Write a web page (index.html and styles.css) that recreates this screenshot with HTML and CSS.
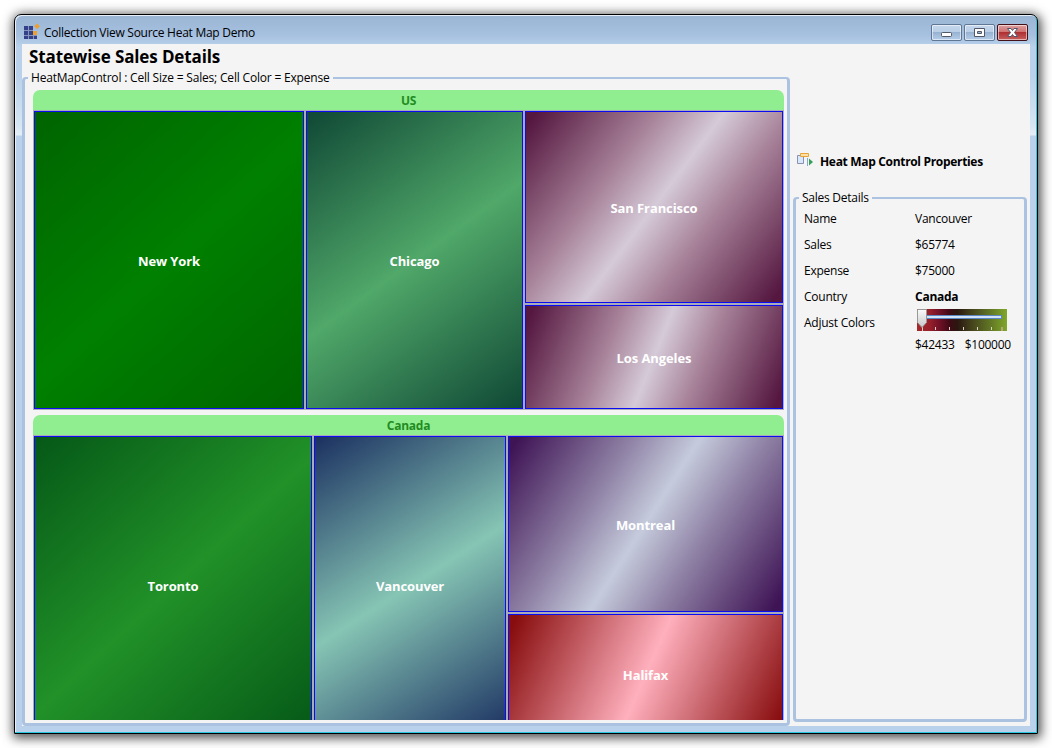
FILE: index.html
```html
<!DOCTYPE html>
<html lang="en">
<head>
<meta charset="utf-8">
<title>Collection View Source Heat Map Demo</title>
<link rel="stylesheet" href="styles.css">
</head>
<body>
<div class="window">
  <header class="titlebar">
    <svg class="app-icon" width="16" height="17" viewBox="0 0 16 17">
      <path fill="#8795bd" d="M0 3h9v13H0zM9 12h4v4H9z"/>
      <path fill="#34408a" shape-rendering="crispEdges" d="M0 3h4v4H0zM5 3h4v4H5zM0 8h4v4H0zM5 8h4v4H5zM0 13h4v3H0zM5 13h4v3H5zM10 13h3v3h-3z"/>
      <path fill="#eda02f" d="M9 8h4v4H9zM13 0.500l2.800 2.800L13 6.100l-2.800-2.800z"/>
    </svg>
    <span class="title">Collection View Source Heat Map Demo</span>
    <div class="controls">
      <button class="ctl" aria-label="Minimize"><svg width="29" height="15" viewBox="0 0 29 15"><rect x="9.5" y="7.5" width="10" height="4" rx="1" fill="#fff" stroke="#535666"/></svg></button>
      <button class="ctl" aria-label="Maximize"><svg width="29" height="15" viewBox="0 0 29 15"><path d="M9.5 3.5h10v8h-10zM12.500 6.500h4v2h-4z" fill="#fff" fill-rule="evenodd" stroke="#535666"/></svg></button>
      <button class="ctl close" aria-label="Close"><svg width="29" height="15" viewBox="0 0 29 15"><path d="M9.500 3.500h3.500l1.500 2 1.500-2h3.500l-3 4 3 4H16l-1.500-2-1.500 2H9.500l3-4z" fill="#fff" stroke="#53566b"/></svg></button>
    </div>
  </header>
  <main class="client">
    <section class="left">
      <h1>Statewise Sales Details</h1>
      <fieldset class="group map-group">
        <legend>HeatMapControl : Cell Size = Sales; Cell Color = Expense</legend>
        <div class="map">
          <div class="band">US</div>
          <div class="cells us">
            <div class="cell newyork">New York</div>
            <div class="cell chicago">Chicago</div>
            <div class="cell sanfrancisco">San Francisco</div>
            <div class="cell losangeles">Los Angeles</div>
          </div>
          <div class="band">Canada</div>
          <div class="cells canada">
            <div class="cell toronto">Toronto</div>
            <div class="cell vancouver">Vancouver</div>
            <div class="cell montreal">Montreal</div>
            <div class="cell halifax">Halifax</div>
          </div>
        </div>
      </fieldset>
    </section>
    <aside class="right">
      <h2>
        <svg width="17" height="14" viewBox="0 0 17 14">
          <path d="M.5 2.500h6v8h-6z" fill="#d5e9fa" stroke="#8f8fb5"/>
          <path d="M3.500.5h8v3h-8z" fill="#fbe3a4" stroke="#e9a23b"/>
          <path d="M10.500 5v8" stroke="#8aa7c8"/>
          <path d="M12 5.500v7l4-3.500z" fill="#36a05a"/>
        </svg>
        <span>Heat Map Control Properties</span>
      </h2>
      <fieldset class="group details">
        <legend>Sales Details</legend>
        <dl>
          <dt>Name</dt><dd>Vancouver</dd>
          <dt>Sales</dt><dd>$65774</dd>
          <dt>Expense</dt><dd>$75000</dd>
          <dt>Country</dt><dd class="strong">Canada</dd>
          <dt>Adjust Colors</dt>
          <dd>
            <svg class="slider" width="90" height="22" viewBox="0 0 90 22">
              <defs>
                <linearGradient id="range"><stop offset="0" stop-color="#a5272b"/><stop offset=".14" stop-color="#98202a"/><stop offset=".25" stop-color="#701126"/><stop offset=".36" stop-color="#400a15"/><stop offset=".45" stop-color="#2b1710"/><stop offset=".6" stop-color="#43411b"/><stop offset=".8" stop-color="#5f7324"/><stop offset="1" stop-color="#80a82a"/></linearGradient>
                <linearGradient id="thumb" x2="0" y2="1"><stop offset="0" stop-color="#fafafa"/><stop offset="1" stop-color="#c8c8c8"/></linearGradient>
              </defs>
              <rect width="90" height="22" fill="url(#range)"/>
              <path d="M5.500 18v4M18.500 18v3M32.500 18v3M46.500 18v3M60.500 18v3M74.500 18v3" stroke="#d9d2c4"/>
              <path d="M85 18v4" stroke="#b7a67b" stroke-width="2"/>
              <rect x="5.500" y="6.500" width="79" height="3" fill="#d3e2f4" stroke="#5b86c4"/>
              <path d="M.5.5h9v13L5 18.500.5 13.500z" fill="url(#thumb)" stroke="#989898"/>
            </svg>
          </dd>
        </dl>
        <div class="range"><span>$42433</span><span>$100000</span></div>
      </fieldset>
    </aside>
  </main>
</div>
</body>
</html>
```
FILE: styles.css
```css
* { box-sizing: border-box; }
body {
  margin: 0;
  padding: 14px;
  width: 1052px;
  height: 748px;
  overflow: hidden;
  background: #fff;
  color: #000;
  font: 12px/18px "Open Sans", "Noto Sans", sans-serif;
  letter-spacing: -0.25px;
}
h1, h2, dl, dd, fieldset { margin: 0; padding: 0; }

.window {
  display: flex;
  flex-direction: column;
  width: 1024px;
  height: 720px;
  padding: 0 6px 7px 7px;
  border: 1px solid #000;
  border-radius: 7px 7px 0 0;
  background: linear-gradient(#9ab4d3 0, #a6c0df 20px, #b9d1ea 32px, #b9d1ea 60px, #d5e5f3 110px, #e4eef7 120px, #b9d1ea 121px);
  box-shadow: inset -1px -1px #29c8e0, inset 1px 1px #e8f1fa, 1px 2px 11px 2px rgba(0, 0, 0, .7);
}
.titlebar {
  display: flex;
  align-items: flex-start;
  flex: 0 0 29px;
  padding-left: 2px;
}
.app-icon { margin-top: 8px; }
.title { flex: 1; margin: 9px 0 0 4px; letter-spacing: -0.27px; }
.controls { display: flex; gap: 2px; margin: 9px 3px 0 0; }
.ctl {
  width: 31px;
  height: 17px;
  padding: 0;
  border: 1px solid #5f7695;
  border-radius: 2px;
  background: linear-gradient(#c5d8ed 0, #b8cce5 50%, #98b2d1 50%, #b4cde9 100%);
  box-shadow: inset 0 0 0 1px rgba(255, 255, 255, .55);
}
.ctl svg { display: block; }
.close {
  border-color: #431017;
  background: linear-gradient(#dda1a0 0, #cd6e6d 50%, #ae3032 50%, #c9605f 100%);
}

.client { display: flex; flex: 1; min-height: 0; margin-right: 1px; background: #f4f4f4; }
.left { display: flex; flex-direction: column; flex: 0 0 768px; }
h1 { height: 25px; padding: 1px 0 0 7px; font-size: 17px; line-height: 24px; letter-spacing: -0.12px; }
.group {
  min-width: 0;
  border: 3px solid #abc2e0;
  border-top-width: 2px;
  border-radius: 4px;
}
legend { height: 18px; margin-left: 3px; padding: 0 3px; line-height: 18px; white-space: nowrap; }
.map-group { flex: 1; min-height: 0; }
.map-group legend { letter-spacing: -0.19px; }
.map { width: 751px; height: 630px; margin: 3px 0 0 8px; overflow: hidden; }
.band {
  height: 20px;
  padding-top: 1px;
  border-radius: 7px 7px 0 0;
  background: #90ee90;
  color: #228b22;
  font-weight: 700;
  line-height: 20px;
  text-align: center;
}
.cells { display: grid; gap: 2px; padding: 1px; background: #aaabba; }
.us { height: 300px; margin-bottom: 5px; grid-template: 192px 104px / 270px 217px 258px; }
.canada { height: 302px; grid-template: 176px 122px / 278px 192px 275px; }
.cell {
  display: flex;
  align-items: center;
  justify-content: center;
  border: 1px solid #0c0cf0;
  background-origin: border-box;
  color: #fff;
  font-size: 13px;
  font-weight: 700;
  letter-spacing: -0.1px;
}
.us .cell, .montreal { padding-top: 2px; }
.newyork, .chicago, .toronto, .vancouver { grid-row: 1 / 3; }
.newyork { background-image: linear-gradient(137.8deg, #006400, #008000 50%, #006400); }
.chicago { background-image: linear-gradient(143.9deg, #0f4735, #50a869 50%, #0f4735); }
.sanfrancisco { background-image: linear-gradient(126.7deg, #551740 3%, #a78299 33%, #d5cad8 50%, #a78299 67%, #551740 97%); }
.losangeles { background-image: linear-gradient(112deg, #551740 3%, #a78299 33%, #d5cad8 50%, #a78299 67%, #551740 97%); }
.toronto { background-image: linear-gradient(137.2deg, #055817, #219128 50%, #055817); }
.vancouver { background-image: linear-gradient(147.4deg, #1a2f60, #86c5b4 50%, #1a2f60); }
.montreal { background-image: linear-gradient(122.6deg, #3f1455 3%, #8e80a4 32%, #c5cbdc 50%, #8e80a4 68%, #3f1455 97%); }
.halifax { background-image: linear-gradient(113.9deg, #880d0e 3%, #ffb0bd 50%, #880d0e 97%); }

.right { display: flex; flex-direction: column; width: 234px; margin: 0 0 4px 3px; }
h2 {
  display: flex;
  gap: 6px;
  height: 145px;
  padding: 109px 0 0 4px;
  font-size: 12px;
  line-height: 18px;
  letter-spacing: -0.32px;
}
.details { flex: 1; }
dl {
  display: grid;
  grid-template-columns: 111px 1fr;
  grid-auto-rows: 26px;
  margin-top: -1px;
  padding-left: 8px;
  line-height: 26px;
}
.strong { font-weight: 700; }
.slider { display: block; margin: -1px 0 0 2px; }
.range { display: flex; gap: 10px; margin-left: 119px; }
```
